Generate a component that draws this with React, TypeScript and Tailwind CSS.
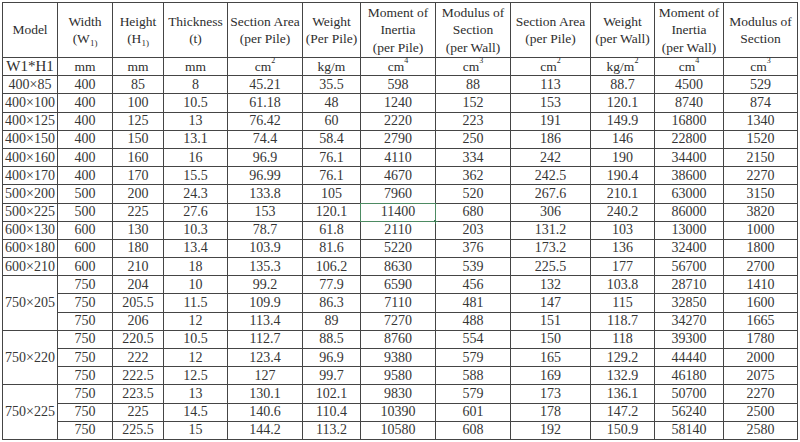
import React from "react";

type Row = string[];

const single: Row[] = [
  ["400×85", "400", "85", "8", "45.21", "35.5", "598", "88", "113", "88.7", "4500", "529"],
  ["400×100", "400", "100", "10.5", "61.18", "48", "1240", "152", "153", "120.1", "8740", "874"],
  ["400×125", "400", "125", "13", "76.42", "60", "2220", "223", "191", "149.9", "16800", "1340"],
  ["400×150", "400", "150", "13.1", "74.4", "58.4", "2790", "250", "186", "146", "22800", "1520"],
  ["400×160", "400", "160", "16", "96.9", "76.1", "4110", "334", "242", "190", "34400", "2150"],
  ["400×170", "400", "170", "15.5", "96.99", "76.1", "4670", "362", "242.5", "190.4", "38600", "2270"],
  ["500×200", "500", "200", "24.3", "133.8", "105", "7960", "520", "267.6", "210.1", "63000", "3150"],
  ["500×225", "500", "225", "27.6", "153", "120.1", "11400", "680", "306", "240.2", "86000", "3820"],
  ["600×130", "600", "130", "10.3", "78.7", "61.8", "2110", "203", "131.2", "103", "13000", "1000"],
  ["600×180", "600", "180", "13.4", "103.9", "81.6", "5220", "376", "173.2", "136", "32400", "1800"],
  ["600×210", "600", "210", "18", "135.3", "106.2", "8630", "539", "225.5", "177", "56700", "2700"],
];

const groups: { model: string; rows: Row[] }[] = [
  {
    model: "750×205",
    rows: [
      ["750", "204", "10", "99.2", "77.9", "6590", "456", "132", "103.8", "28710", "1410"],
      ["750", "205.5", "11.5", "109.9", "86.3", "7110", "481", "147", "115", "32850", "1600"],
      ["750", "206", "12", "113.4", "89", "7270", "488", "151", "118.7", "34270", "1665"],
    ],
  },
  {
    model: "750×220",
    rows: [
      ["750", "220.5", "10.5", "112.7", "88.5", "8760", "554", "150", "118", "39300", "1780"],
      ["750", "222", "12", "123.4", "96.9", "9380", "579", "165", "129.2", "44440", "2000"],
      ["750", "222.5", "12.5", "127", "99.7", "9580", "588", "169", "132.9", "46180", "2075"],
    ],
  },
  {
    model: "750×225",
    rows: [
      ["750", "223.5", "13", "130.1", "102.1", "9830", "579", "173", "136.1", "50700", "2270"],
      ["750", "225", "14.5", "140.6", "110.4", "10390", "601", "178", "147.2", "56240", "2500"],
      ["750", "225.5", "15", "144.2", "113.2", "10580", "608", "192", "150.9", "58140", "2580"],
    ],
  },
];

const H = ({ children }: { children: React.ReactNode }) => (
  <div className="bg-white flex flex-col items-center justify-center text-center text-[13.5px] leading-[17.5px] text-[#2e2e2e]">
    {children}
  </div>
);

const U = ({ children, cls = "" }: { children: React.ReactNode; cls?: string }) => (
  <div className={"bg-white flex items-center justify-center text-[13.5px] leading-none text-[#2e2e2e] " + cls}>
    {children}
  </div>
);

const Sup = ({ n }: { n: string }) => <sup className="text-[8px] top-[-6px]">{n}</sup>;

const C = ({ children, sel = false }: { children: React.ReactNode; sel?: boolean }) => (
  <div className="relative bg-white flex items-center justify-center text-[14px] leading-none text-[#363636]">
    {children}
    {sel && (
      <div className="absolute inset-[-1px] border border-[#4d8a62]">
        <div className="absolute right-[-3px] bottom-[-3px] w-[4px] h-[4px] bg-[#3f7a54]" />
      </div>
    )}
  </div>
);

export default function App() {
  return (
    <div className="w-[800px] h-[442px] bg-white overflow-hidden pl-[2px] pt-[2px]" style={{ fontFamily: '"Liberation Serif", "Times New Roman", serif' }}>
      <div className="inline-grid bg-[#454545] p-px gap-px grid-cols-[54px_54px_50px_63px_74px_57px_74px_74px_79px_63px_68px_73px] grid-rows-[54px_repeat(21,17.2px)]">
        <H>Model</H>
        <H>
          <span>Width</span>
          <span>
            (W<sub className="text-[9px] bottom-[-3px]">1)</sub>
          </span>
        </H>
        <H>
          <span>Height</span>
          <span>
            (H<sub className="text-[9px] bottom-[-3px]">1)</sub>
          </span>
        </H>
        <H>
          <span>Thickness</span>
          <span>(t)</span>
        </H>
        <H>
          <span>Section Area</span>
          <span>(per Pile)</span>
        </H>
        <H>
          <span>Weight</span>
          <span>(Per Pile)</span>
        </H>
        <H>
          <span>Moment of</span>
          <span>Inertia</span>
          <span>(per Pile)</span>
        </H>
        <H>
          <span>Modulus of</span>
          <span>Section</span>
          <span>(per Wall)</span>
        </H>
        <H>
          <span>Section Area</span>
          <span>(per Pile)</span>
        </H>
        <H>
          <span>Weight</span>
          <span>(per Wall)</span>
        </H>
        <H>
          <span>Moment of</span>
          <span>Inertia</span>
          <span>(per Wall)</span>
        </H>
        <H>
          <span>Modulus of</span>
          <span>Section</span>
        </H>

        <U cls="text-[15px]">W1*H1</U>
        <U>mm</U>
        <U>mm</U>
        <U>mm</U>
        <U>
          cm<Sup n="2" />
        </U>
        <U>kg/m</U>
        <U>
          cm<Sup n="4" />
        </U>
        <U>
          cm<Sup n="3" />
        </U>
        <U>
          cm<Sup n="2" />
        </U>
        <U>
          kg/m<Sup n="2" />
        </U>
        <U>
          cm<Sup n="4" />
        </U>
        <U>
          cm<Sup n="3" />
        </U>

        {single.map((r, i) =>
          r.map((v, j) => (
            <C key={`s${i}-${j}`} sel={i === 7 && j === 6}>
              {v}
            </C>
          ))
        )}

        {groups.map((g, gi) => (
          <React.Fragment key={`g${gi}`}>
            <div className="row-span-3 bg-white flex items-center justify-center text-[14px] leading-none text-[#363636]">
              {g.model}
            </div>
            {g.rows.map((r, i) =>
              r.map((v, j) => <C key={`g${gi}-${i}-${j}`}>{v}</C>)
            )}
          </React.Fragment>
        ))}
      </div>
    </div>
  );
}
